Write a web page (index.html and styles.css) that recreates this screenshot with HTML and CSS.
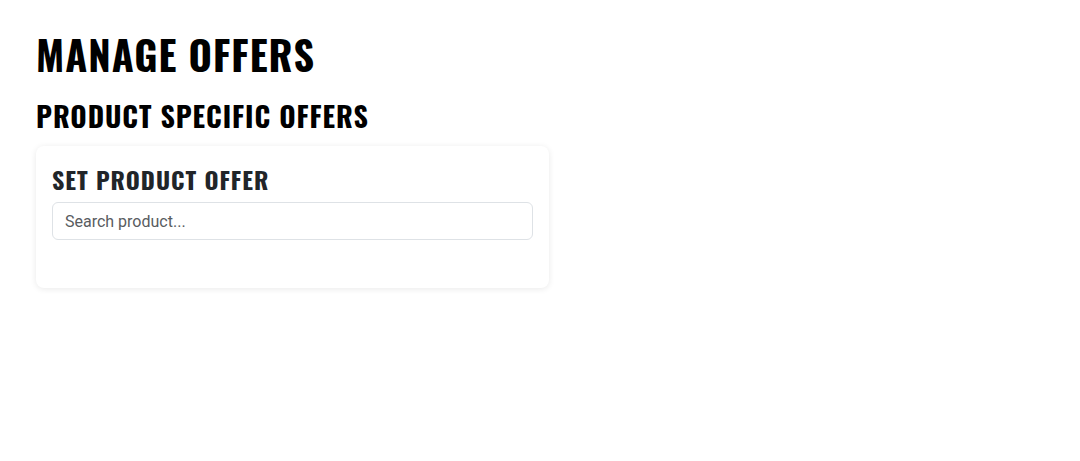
FILE: index.html
```html
<!DOCTYPE html>
<html lang="en">
<head>
<meta charset="utf-8">
<title>Manage Offers</title>
<link rel="stylesheet" href="styles.css">
</head>
<body>
<main class="page">
  <h1 class="title">MANAGE OFFERS</h1>
  <h2 class="subtitle">PRODUCT SPECIFIC OFFERS</h2>
  <section class="card">
    <h3 class="card-title">SET PRODUCT OFFER</h3>
    <input class="search" type="text" placeholder="Search product...">
    <div class="results"></div>
  </section>
</main>
</body>
</html>
```
FILE: styles.css
```css
* { box-sizing: border-box; }
body {
  margin: 0;
  background: #fff;
  font-family: Roboto, "Liberation Sans", sans-serif;
  color: #212529;
}
.page {
  padding: 30px 36px;
}
.title {
  margin: 0 0 21px;
  font-family: Oswald, "DejaVu Sans Condensed", sans-serif;
  font-weight: 700;
  font-size: 40px;
  line-height: 1.2;
  letter-spacing: 1px;
  color: #000;
}
.subtitle {
  margin: 0 0 13px;
  font-family: Oswald, "DejaVu Sans Condensed", sans-serif;
  font-weight: 700;
  font-size: 28px;
  line-height: 1.2;
  letter-spacing: 0.9px;
  color: #000;
}
.card {
  width: 513px;
  background: #fff;
  border-radius: 8px;
  box-shadow: 0 1px 6px rgba(0, 0, 0, 0.09);
  padding: 19px 16px 16px;
}
.card-title {
  margin: 0 0 9px;
  font-family: Oswald, "DejaVu Sans Condensed", sans-serif;
  font-weight: 700;
  font-size: 24px;
  line-height: 1.2;
  letter-spacing: 1px;
  color: #212529;
}
.search {
  display: block;
  width: 100%;
  height: 38px;
  padding: 6px 12px;
  border: 1px solid #dee2e6;
  border-radius: 6px;
  font-family: Roboto, "Liberation Sans", sans-serif;
  font-size: 16px;
  color: #212529;
  background: #fff;
  outline: none;
}
.search::placeholder { color: #595c5f; }
.results {
  height: 32px;
}
```
